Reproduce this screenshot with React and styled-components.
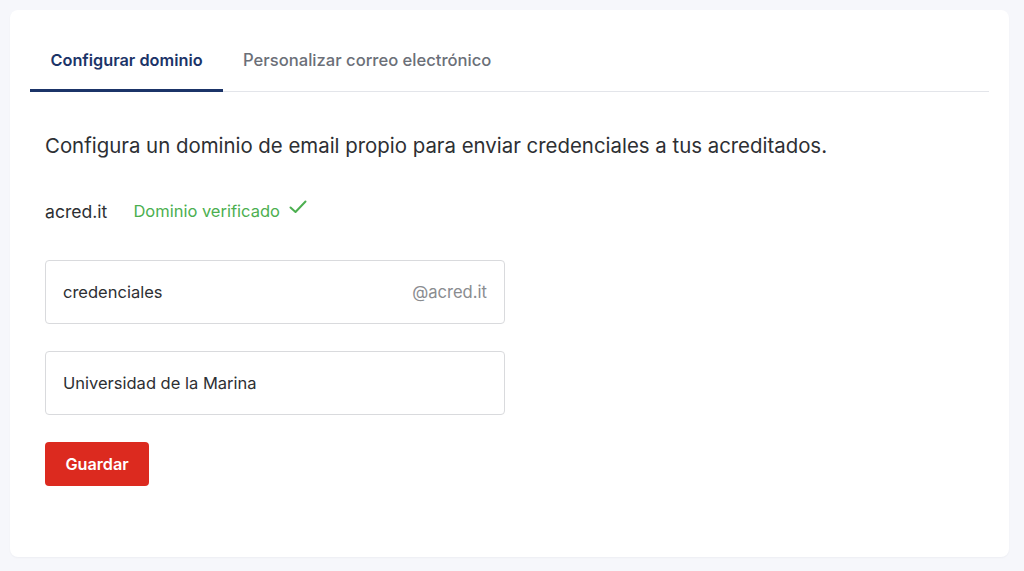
import React from 'react';
import styled, { createGlobalStyle } from 'styled-components';

const navy = '#1b3468';
const green = '#4caf50';
const red = '#dc2a1f';

const GlobalStyle = createGlobalStyle`
  body {
    margin: 0;
    background: #f6f7fb;
    font-family: Inter, "Noto Sans", sans-serif;
  }
`;

const Page = styled.div`
  padding: 10px 15px 14px 10px;
  min-height: 571px;
  box-sizing: border-box;
`;

const Card = styled.div`
  background: #fff;
  border-radius: 8px;
  padding: 20px 20px 71px;
  box-shadow: 0 1px 2px rgba(20, 30, 60, 0.04);
`;

const Tabs = styled.div`
  display: flex;
  border-bottom: 1px solid #e3e5ea;
`;

const Tab = styled.button`
  border: none;
  background: none;
  padding: 20px ${p => (p.active ? '20.5px' : '20px')} 19px;
  margin-bottom: -1px;
  font-family: inherit;
  font-size: ${p => (p.active ? '16.3px' : '16.6px')};
  line-height: 20px;
  font-weight: ${p => (p.active ? 600 : 500)};
  color: ${p => (p.active ? navy : '#6b6f78')};
  border-bottom: 3px solid ${p => (p.active ? navy : 'transparent')};
  cursor: pointer;
`;

const Content = styled.div`
  padding: 0 15px;
`;

const Intro = styled.p`
  margin: 40px 0 0;
  font-size: 20.4px;
  color: #2d2f33;
  line-height: 28px;
`;

const DomainRow = styled.div`
  display: flex;
  align-items: center;
  margin-top: 40px;
  gap: 26px;
  height: 22px;
`;

const Domain = styled.span`
  font-size: 17.6px;
  color: #2d2f33;
`;

const Verified = styled.span`
  display: flex;
  align-items: center;
  gap: 9px;
  font-size: 16.5px;
  color: ${green};

  svg {
    margin-top: -8px;
  }
`;

const Form = styled.div`
  display: flex;
  flex-direction: column;
  gap: 27px;
  margin-top: 38px;
  width: 460px;
`;

const Field = styled.div`
  display: flex;
  align-items: center;
  height: 64px;
  box-sizing: border-box;
  border: 1px solid #d9dadd;
  border-radius: 4px;
  padding: 0 17px;
`;

const Input = styled.input`
  flex: 1;
  border: none;
  outline: none;
  font-family: inherit;
  font-size: 16.5px;
  color: #2d2f33;
  background: none;
  padding: 0;
`;

const Suffix = styled.span`
  font-size: 16.6px;
  color: #8a8c90;
`;

const SaveButton = styled.button`
  display: block;
  margin-top: 27px;
  background: ${red};
  color: #fff;
  border: none;
  border-radius: 4px;
  height: 44px;
  width: 104px;
  padding: 0;
  font-family: inherit;
  font-size: 16.2px;
  font-weight: 600;
  cursor: pointer;
`;

const Check = () => (
  <svg width="18" height="14" viewBox="0 0 18 14" fill="none">
    <path d="M1.5 7.5 L6.5 12 L16.5 1.5" stroke={green} strokeWidth="2" strokeLinecap="round" strokeLinejoin="round" />
  </svg>
);

export default function App() {
  return (
    <Page>
      <GlobalStyle />
      <Card>
        <Tabs>
          <Tab active>Configurar dominio</Tab>
          <Tab>Personalizar correo electrónico</Tab>
        </Tabs>
        <Content>
          <Intro>Configura un dominio de email propio para enviar credenciales a tus acreditados.</Intro>
          <DomainRow>
            <Domain>acred.it</Domain>
            <Verified>
              Dominio verificado
              <Check />
            </Verified>
          </DomainRow>
          <Form>
            <Field>
              <Input defaultValue="credenciales" />
              <Suffix>@acred.it</Suffix>
            </Field>
            <Field>
              <Input defaultValue="Universidad de la Marina" />
            </Field>
          </Form>
          <SaveButton>Guardar</SaveButton>
        </Content>
      </Card>
    </Page>
  );
}
